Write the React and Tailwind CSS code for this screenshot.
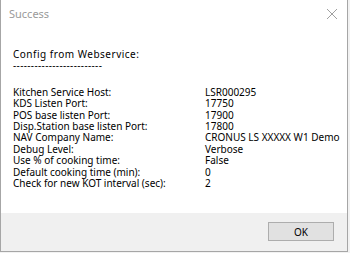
const rows = [
  ['Kitchen Service Host:', 'LSR000295'],
  ['KDS Listen Port:', '17750'],
  ['POS base listen Port:', '17900'],
  ['Disp.Station base listen Port:', '17800'],
  ['NAV Company Name:', 'CRONUS LS XXXXX W1 Demo'],
  ['Debug Level:', 'Verbose'],
  ['Use % of cooking time:', 'False'],
  ['Default cooking time (min):', '0'],
  ['Check for new KOT interval (sec):', '2'],
];

const App = () => {
  return (
    <div className="w-[350px] h-[253px] bg-[#f2f2f2] overflow-hidden" style={{ fontFamily: '"Segoe UI", "Noto Sans", sans-serif' }}>
      <div className="w-[348px] h-[252px] flex flex-col bg-white border-l border-r border-b border-[#a6a6a6]">
        <div className="h-[28px] flex items-center justify-between pl-[8px] pr-[8px]">
          <span className="text-[11px] text-[#9a9a9a]">Success</span>
          <svg width="12" height="12" viewBox="0 0 12 12" className="mr-[1px]">
            <path d="M1 1 L11 11 M11 1 L1 11" stroke="#a0a0a0" strokeWidth="1" fill="none" />
          </svg>
        </div>
        <div className="flex-1 pt-[21px] pl-[12px] text-[10px] leading-[11.4px] text-black">
          <div className="tracking-[0.5px]">Config from Webservice:</div>
          <div className="tracking-[0.35px]">-------------------------</div>
          <div className="mt-[15px] grid grid-cols-[192px_1fr]">
            {rows.map(([k, v]) => (
              <div key={k} className="contents">
                <div className="whitespace-nowrap">{k}</div>
                <div className="whitespace-nowrap">{v}</div>
              </div>
            ))}
          </div>
        </div>
        <div className="h-[38px] bg-[#f0f0f0] flex items-center justify-end pr-[13px]">
          <button className="w-[66px] h-[19px] mt-[-1px] bg-[#e1e1e1] border border-[#adadad] text-[10px] text-black leading-none">OK</button>
        </div>
      </div>
    </div>
  );
};

export default App;
